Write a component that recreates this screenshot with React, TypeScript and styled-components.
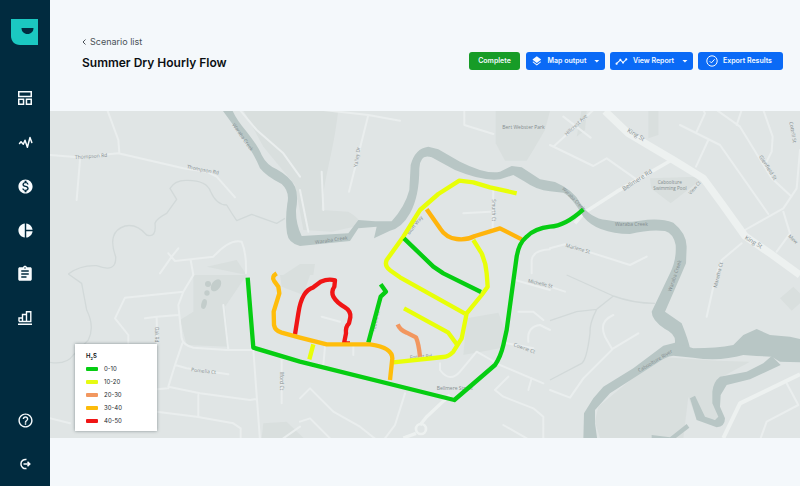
import React from "react";
import styled, { createGlobalStyle } from "styled-components";
import {
  MdArrowDropDown,
  MdAssignment,
  MdHelpOutline,
  MdLayers,
  MdMonetizationOn,
  MdPieChart,
  MdTimeline,
} from "react-icons/md";

const GlobalStyle = createGlobalStyle`
  *, *::before, *::after { box-sizing: border-box; }
  body {
    margin: 0;
    background: #f4f8fb;
    color: #0b0f12;
    font-family: Inter, "Liberation Sans", sans-serif;
  }
`;

const Shell = styled.div`
  display: grid;
  grid-template-columns: 50px minmax(0, 1fr);
  min-height: 100vh;
`;

const Sidebar = styled.aside`
  display: flex;
  flex-direction: column;
  align-items: center;
  padding: 19px 0 12px;
  background: #012b3f;
`;

const LogoLink = styled.a`
  display: block;
  height: 26px;
  margin-bottom: 43px;
  padding-right: 2px;
`;

const NavGroup = styled.nav<{ $bottom?: boolean }>`
  display: flex;
  flex-direction: column;
  gap: 24px;
  margin-top: ${(p) => (p.$bottom ? "auto" : "0")};
`;

const NavButton = styled.button`
  display: grid;
  place-items: center;
  width: 26px;
  height: 20px;
  padding: 0;
  border: 0;
  background: none;
  color: #f8fcfe;
  cursor: pointer;
`;

const Main = styled.main`
  min-width: 0;
`;

const Header = styled.header`
  display: flex;
  align-items: center;
  justify-content: space-between;
  padding: 35px 17px 40px 32px;
`;

const Heading = styled.div`
  display: flex;
  flex-direction: column;
  gap: 6px;
`;

const BackLink = styled.a`
  display: flex;
  align-items: center;
  gap: 4px;
  color: #4a5157;
  font-size: 9px;
  line-height: 14px;
  text-decoration: none;
`;

const Title = styled.h1`
  margin: 0;
  font-size: 12px;
  line-height: 16px;
  font-weight: 600;
  white-space: nowrap;
`;

const Actions = styled.div`
  display: flex;
  gap: 5px;
  padding-top: 16px;
`;

const ActionButton = styled.button<{ $tone?: "done"; $width: number; $inset?: number }>`
  display: flex;
  align-items: center;
  justify-content: ${(p) => (p.$tone === "done" ? "center" : "flex-start")};
  gap: 5px;
  width: ${(p) => p.$width}px;
  height: 18px;
  margin-right: ${(p) => (p.$tone === "done" ? "1px" : "0")};
  padding: 0 ${(p) => (p.$tone === "done" ? 0 : 2)}px 0 ${(p) => (p.$tone === "done" ? 0 : p.$inset ?? 5)}px;
  border: 0;
  border-radius: 3px;
  background: ${(p) => (p.$tone === "done" ? "#179c27" : "#0a6af6")};
  color: #f5faff;
  font-family: inherit;
  font-size: 7px;
  line-height: 10px;
  font-weight: 600;
  white-space: nowrap;
  cursor: pointer;
`;

const Caret = styled(MdArrowDropDown)`
  margin-left: auto;
`;

const MapPanel = styled.section`
  position: relative;
`;

const MapCanvas = styled.svg`
  display: block;
  width: 100%;
  height: auto;
  background: #e0e5e5;
  font-family: "Open Sans", sans-serif;
`;

const Legend = styled.section`
  position: absolute;
  left: 25px;
  bottom: 7px;
  width: 82px;
  padding: 5px 11px 4px;
  background: #ffffff;
  box-shadow: 0 0 3px rgba(40, 55, 60, 0.5);
`;

const LegendTitle = styled.h2`
  margin: 0;
  font-size: 6px;
  line-height: 13px;
  font-weight: 600;

  sub {
    font-size: 4px;
    line-height: 0;
  }
`;

const LegendList = styled.ul`
  margin: 0;
  padding: 0;
  list-style: none;
`;

const LegendItem = styled.li`
  display: flex;
  align-items: center;
  gap: 6px;
  color: #22282c;
  font-size: 6px;
  line-height: 13px;
`;

const Swatch = styled.span<{ $color: string }>`
  width: 12px;
  height: 4px;
  border-radius: 1px;
  background: ${(p) => p.$color};
`;

const Logo = () => (
  <svg width="27" height="26" viewBox="0 0 27 26" aria-hidden="true">
    <path d="M0 0H27V26H9C3.500 26 0 22 0 17Z" fill="#1bc8c1" />
    <path d="M10.500 9H22.500C22.500 12.500 20 15 16.500 15S10.500 12.500 10.500 9Z" fill="#012b3f" />
  </svg>
);

const DashboardIcon = () => (
  <svg width="14" height="14" viewBox="0 0 14 14" fill="none" stroke="currentColor" strokeWidth="1.500" aria-hidden="true">
    <path d="M.75.75h12.500v4.700H.75zM.75 8.250h4.800v5H.75zM8.450 8.250h4.800v5h-4.800z" />
  </svg>
);

const PulseIcon = () => (
  <svg width="15" height="13" viewBox="0 0 15 13" fill="none" stroke="currentColor" strokeWidth="1.500" strokeLinejoin="round" strokeLinecap="round" aria-hidden="true">
    <path d="M1.500 7.500 3 5.700l2.300 2.500L7 4.300l2.400 7L12 1.500l1.800 5" />
  </svg>
);

const BarsIcon = () => (
  <svg width="14" height="14" viewBox="0 0 14 14" fill="none" stroke="currentColor" strokeWidth="1.400" aria-hidden="true">
    <path d="M0 13.200h14M1 10.500V7h3.500v3.500M4.500 10.500v-7h4v7M8.500 10.500V.8h4.300v9.700ZM1 10.500h8" />
  </svg>
);

const LogoutIcon = () => (
  <svg width="12" height="12" viewBox="0 0 12 12" fill="none" stroke="currentColor" strokeWidth="1.500" aria-hidden="true">
    <path d="M7.500 1.500A4.600 4.600 0 1 0 7.500 10.500M4.500 6h6M8.500 3.700 10.800 6 8.500 8.300" />
  </svg>
);

const CheckCircleIcon = () => (
  <svg width="12" height="12" viewBox="0 0 12 12" fill="none" stroke="currentColor" aria-hidden="true">
    <circle cx="6" cy="6" r="5.200" />
    <path d="m3.700 6.200 1.700 1.700 3.200-3.600" />
  </svg>
);

const ChevronIcon = () => (
  <svg width="4" height="6" viewBox="0 0 4 6" fill="none" stroke="currentColor" aria-hidden="true">
    <path d="M3.500.5 1 3l2.500 2.500" />
  </svg>
);

const legend = [
  { label: "0-10", color: "#06cd12" },
  { label: "10-20", color: "#e6fb12" },
  { label: "20-30", color: "#f2975f" },
  { label: "30-40", color: "#fcbb0b" },
  { label: "40-50", color: "#f01515" },
];

const pipes = [
  { color: "#e8ff08", d: "M1400 250 1320 232 1270 217 1228 212 1165 252 1110 300 1060 380 1010 450Q1002 468 1022 482L1050 502 1245 611" },
  { color: "#e8ff08", d: "M1270 390 1295 430Q1308 460 1310 490L1313 530 1295 555 1250 610 1235 685 1210 725Q1195 740 1180 741L1030 757" },
  { color: "#e8ff08", d: "M1062 595 1195 668 1222 705M790 703 778 748" },
  { color: "#06cd12", d: "M1062 385 1150 470 1180 490 1293 546" },
  { color: "#f2975f", d: "M1043 643Q1050 660 1070 668L1098 682Q1106 700 1110 740" },
  { color: "#ffb40c", d: "M1130 298 1170 355Q1188 383 1220 387 1250 391 1275 378L1350 355 1415 388" },
  { color: "#f01515", d: "M735 673 745 610Q750 575 762 555 772 538 790 532L812 515Q835 505 855 511L853 530Q843 545 850 560 860 578 885 592 903 603 901 622L897 640Q886 650 888 670L882 700H900" },
  { color: "#06cd12", d: "M955 698 992 560 1008 545 992 523" },
  { color: "#ffbd0b", d: "M680 490Q664 500 672 512L685 530 688 550 671 605 672 645Q675 662 695 668L750 683 830 703 960 703Q1027 712 1027 745L1020 810" },
  { color: "#06cd12", d: "M593 503 610 713 750 755 1213 870 1335 765Q1352 740 1360 705L1370 660 1400 440Q1406 400 1430 380 1455 355 1500 350 1545 348 1600 298" },
];

type RoadLabel = { x: number; y: number; angle: number; text: string; size?: number };

const roadLabels: RoadLabel[] = [
  { x: 75, y: 147, angle: -4, text: "Thompson Rd" },
  { x: 410, y: 175, angle: 11, text: "Thompson Rd" },
  { x: 546, y: 44, angle: 55, text: "Waraba Creek", size: 15 },
  { x: 796, y: 402, angle: -8, text: "Waraba Creek" },
  { x: 922, y: 172, angle: -82, text: "Yalley Dr" },
  { x: 1357, y: 57, angle: 0, text: "Bert Webster Park" },
  { x: 1325, y: 268, angle: 90, text: "Smurth Ct", size: 14 },
  { x: 1078, y: 375, angle: -52, text: "Bluff Way", size: 15 },
  { x: 1550, y: 78, angle: -43, text: "Hillcrest Ave", size: 15 },
  { x: 1730, y: 65, angle: 30, text: "King St", size: 18 },
  { x: 1722, y: 243, angle: -33, text: "Bellmere Rd", size: 18 },
  { x: 1823, y: 222, angle: 0, text: "Caboolture", size: 14 },
  { x: 1810, y: 239, angle: 0, text: "Swimming Pool", size: 14 },
  { x: 1922, y: 255, angle: -50, text: "View Ct", size: 14 },
  { x: 2126, y: 140, angle: 57, text: "Glenfield St", size: 16 },
  { x: 2218, y: 36, angle: 80, text: "Cottrill St", size: 15 },
  { x: 2083, y: 387, angle: 30, text: "King St", size: 18 },
  { x: 2213, y: 380, angle: 42, text: "Mew", size: 15 },
  { x: 1695, y: 348, angle: 0, text: "Waraba Creek", size: 15 },
  { x: 1535, y: 237, angle: 45, text: "Waraba Creek", size: 14 },
  { x: 1546, y: 410, angle: 16, text: "Marlene St" },
  { x: 1864, y: 546, angle: -72, text: "Waraba Creek" },
  { x: 2000, y: 534, angle: -76, text: "Maretha Ct", size: 15 },
  { x: 1433, y: 517, angle: 13, text: "Michelle St" },
  { x: 1390, y: 708, angle: 20, text: "Cowrie Ct" },
  { x: 1768, y: 787, angle: -31, text: "Caboolture River" },
  { x: 1160, y: 841, angle: 0, text: "Bellmere Street", size: 15 },
  { x: 1080, y: 747, angle: -4, text: "Forest Rd", size: 15 },
  { x: 423, y: 784, angle: 6, text: "Pomelia Ct" },
  { x: 316, y: 650, angle: 90, text: "Oak Rd", size: 14 },
  { x: 690, y: 785, angle: 90, text: "Ilford Ct", size: 15 },
  { x: 975, y: 665, angle: -77, text: "Pebble Ct", size: 14 },
];

const NetworkMap = () => (
  <MapCanvas viewBox="0 3 2250 981" role="img" aria-label="Network map of hydrogen sulphide levels">
    <g fill="#d9dfde">
      <path d="M580 0H865C850 130 820 210 815 300L895 305Q930 325 935 345L845 365 760 360 735 225 640 110Z" />
      <path d="M1337 3H1500L1485 60 1450 120 1430 152H1365L1337 100Z" />
      <path d="M1594 3H1610L1605 60 1580 80Z M1800 205 1940 200 1945 215 1862 280 1803 235Z" />
      <path d="M430 495H590L525 590 537 710 410 705 390 630 430 605Z M470 470 560 450 590 495Z" />
      <path d="M1250 625 1345 608 1365 660 1350 715 1240 735Z M690 495H780L760 555 695 530Z M640 940 710 935 760 984H635Z" />
      <path d="M1825 740 2000 752 2100 755 2010 804 1990 845 2015 927 1940 930 1915 860 1900 984H1650L1635 935 1645 890Z" />
      <path d="M1795 3H1825V75L1795 85Z M2190 565 2230 530 2250 550V580L2225 602Z" />
      <path d="M750 462H795L790 495H700Z" />
    </g>

    <g fill="none" stroke="#d2d9d9" strokeWidth="4" strokeLinejoin="round">
      <path d="M55 492Q90 465 140 467 200 490 197 440 170 365 225 348 260 340 290 375 320 385 315 340 320 325 350 310L380 268 360 235Q375 210 410 211 470 210 482 245 500 285 530 285 545 310 560 332L605 313 680 340 705 325" />
      <path d="M55 492 95 520 110 600Q135 650 115 690L70 735Q50 765 0 757" />
      <path d="M1550 495 1690 558Q1750 580 1815 580M1500 632 1580 605 1640 598 1690 558M1640 598Q1618 640 1620 670 1610 750 1595 760L1500 810" />
    </g>

    <g fill="none" stroke="#eaeeee" strokeWidth="6" strokeLinejoin="round" strokeLinecap="round">
      <path d="M0 135 85 142 205 130 400 175 470 185 500 200 555 262M172 0 205 90 208 130M90 150 80 270M330 490 365 440 385 415M355 430 375 453 490 440Q540 385 575 395 590 430 588 490M422 450 430 495" />
      <path d="M570 0 620 60 700 130 750 200M820 0 955 15 897 245M955 15 1050 32M1243 0V45L1330 72M1330 235 1328 355M1240 310 1320 305M750 240 775 365M815 185 820 300" />
      <path d="M1500 105 1630 168 1670 145 1755 205M1510 110 1630 0M1540 20 1622 83M1890 45 1980 90 2010 105 2155 312M1938 170 1975 90M1940 65 1965 10 1960 0M2000 0 2070 50 2165 205 2225 260M2060 45 2075 0M2140 0 2168 80 2165 125 2150 155M2250 120 2240 235 2200 295 2085 360M2200 305 2220 370 2180 425M2075 400 2015 450 2000 490" />
      <path d="M1500 415 1545 403 1740 465 1790 440M1445 490V450Q1450 420 1500 418" />
      <path d="M1990 530 1970 620" />
      <g transform="translate(0 495)">
        <path d="M430 0 400 50 225 68 195 130 235 180V205M400 50 385 90 395 190Q400 212 430 218L530 225H610L630 495M397 205 375 270 355 335 450 355 600 375 620 372M320 343 355 340M445 360V425M320 410 440 425 550 445 572 460V495M285 130 320 125 385 120M320 130 322 210M520 90 535 225M375 270 410 280 535 298M695 255V385M0 430 60 445M700 490 750 455" />
        <path d="M750 370 780 340 850 410 930 455 980 495M750 440 780 430 840 490M1065 355 1035 450 1005 490M825 215 820 270M910 213V240M815 125 870 140M1170 265V285Q1200 325 1230 290L1280 230 1350 270 1480 325M1375 305 1335 345 1360 365 1450 400 1480 425V495M1360 450 1430 490M1435 345 1445 310M1395 15 1500 45M1370 205 1450 220M1435 200Q1430 155 1470 150L1500 165M1405 110H1450L1480 135" />
        <path d="M1500 35 1545 50M1500 345 1560 368 1600 310 1690 220 1765 175M1690 120Q1645 140 1665 185L1685 220M2210 325 2245 390 2150 440 2130 495" />
      </g>
    </g>

    <g fill="none" stroke="#edf1f0" strokeLinejoin="round">
      <path d="M1575 340 1600 310 1700 245 1865 150" strokeWidth="11" />
      <path d="M1665 3 1735 70 1870 150 1960 205 2015 280 2085 378 2160 430 2250 495" strokeWidth="22" />
      <path d="M2250 793 2070 880 2020 984" strokeWidth="12" />
      <path d="M1110 945 1130 920 1200 855M1060 984 1098 970" strokeWidth="10" />
      <circle cx="1113" cy="957" r="15" strokeWidth="8" />
    </g>

    <g fill="#b8c6c5">
      <path d="M519 3H548Q560 30 590 65 625 110 635 135 650 165 680 178 720 200 735 230 746 255 738 300 737 340 755 378L895 370 925 330 975 334 1025 334Q1065 290 1078 240L1082 165Q1095 115 1135 110L1165 118 1230 155Q1310 195 1350 185L1385 168 1415 172 1470 208 1515 216Q1570 240 1590 278 1620 325 1670 330 1720 340 1770 332 1830 322 1870 338 1910 370 1910 410L1908 460 1893 495 1845 605 1895 640Q1915 690 1920 715L1930 740 1872 710Q1885 675 1845 657 1805 630 1805 605L1860 490Q1880 450 1877 405 1870 370 1845 363 1800 357 1740 372 1640 370 1600 320 1565 260 1540 248L1500 244Q1460 240 1425 215L1390 195 1350 208Q1300 215 1215 180L1145 142Q1110 130 1108 175 1108 260 1080 310 1055 355 1020 362L972 385 980 350 925 355 900 393 750 408Q715 400 711 370 705 330 712 280 720 245 695 222 650 200 630 175 615 135 575 80Z" />
      <g transform="translate(1500 495)">
        <path d="M100 495 102 415 130 370 160 335 250 280 340 212 375 203 430 220Q500 220 550 210L580 180 620 162 660 180 720 185 750 192V262L690 260 665 245 620 243 580 240Q510 260 430 248L370 242Q345 245 320 265L180 355 135 405V445L142 495Z" />
        <path d="M665 243 692 270 600 313 530 330 512 360 510 395 525 430Q525 455 500 457L440 435 420 370 435 362 465 425 495 435 505 425 487 385 487 350Q490 320 510 305L590 290 640 265Z" />
        <path d="M305 480 360 487 410 447 418 458 370 495H305Z" />
      </g>
    </g>
    <g fill="#c3cdcb">
      <ellipse cx="498" cy="526" rx="13" ry="20" transform="rotate(35 498 526)" />
      <circle cx="474" cy="522" r="9" />
      <circle cx="471" cy="549" r="8" />
      <ellipse cx="462" cy="582" rx="8" ry="15" transform="rotate(15 462 582)" />
    </g>

    <g fill="#848d8f">
      {roadLabels.map((l) => (
        <text key={`${l.x}-${l.y}`} transform={`translate(${l.x} ${l.y}) rotate(${l.angle})`} fontSize={l.size ?? 15}>
          {l.text}
        </text>
      ))}
    </g>

    <g fill="none" strokeWidth="13" strokeLinejoin="round">
      {pipes.map((p) => (
        <path key={p.d} d={p.d} stroke={p.color} />
      ))}
    </g>
  </MapCanvas>
);

export default function App() {
  return (
    <>
      <GlobalStyle />
      <Shell>
        <Sidebar>
          <LogoLink href="#home" aria-label="Home">
            <Logo />
          </LogoLink>
          <NavGroup aria-label="Primary">
            <NavButton aria-label="Dashboard"><DashboardIcon /></NavButton>
            <NavButton aria-label="Activity"><PulseIcon /></NavButton>
            <NavButton aria-label="Costs"><MdMonetizationOn size={17} /></NavButton>
            <NavButton aria-label="Breakdown"><MdPieChart size={17} /></NavButton>
            <NavButton aria-label="Reports"><MdAssignment size={18} /></NavButton>
            <NavButton aria-label="Statistics"><BarsIcon /></NavButton>
          </NavGroup>
          <NavGroup $bottom aria-label="Account">
            <NavButton aria-label="Help"><MdHelpOutline size={17} /></NavButton>
            <NavButton aria-label="Log out"><LogoutIcon /></NavButton>
          </NavGroup>
        </Sidebar>
        <Main>
          <Header>
            <Heading>
              <BackLink href="#scenarios"><ChevronIcon />Scenario list</BackLink>
              <Title>Summer Dry Hourly Flow</Title>
            </Heading>
            <Actions>
              <ActionButton $tone="done" $width={51}>Complete</ActionButton>
              <ActionButton $width={79}><MdLayers size={12} />Map output<Caret size={12} /></ActionButton>
              <ActionButton $width={83}><MdTimeline size={13} />View Report<Caret size={12} /></ActionButton>
              <ActionButton $width={85} $inset={8}><CheckCircleIcon />Export Results</ActionButton>
            </Actions>
          </Header>
          <MapPanel>
            <NetworkMap />
            <Legend aria-label="Legend">
              <LegendTitle>H<sub>2</sub>S</LegendTitle>
              <LegendList>
                {legend.map((item) => (
                  <LegendItem key={item.label}>
                    <Swatch $color={item.color} />
                    {item.label}
                  </LegendItem>
                ))}
              </LegendList>
            </Legend>
          </MapPanel>
        </Main>
      </Shell>
    </>
  );
}
